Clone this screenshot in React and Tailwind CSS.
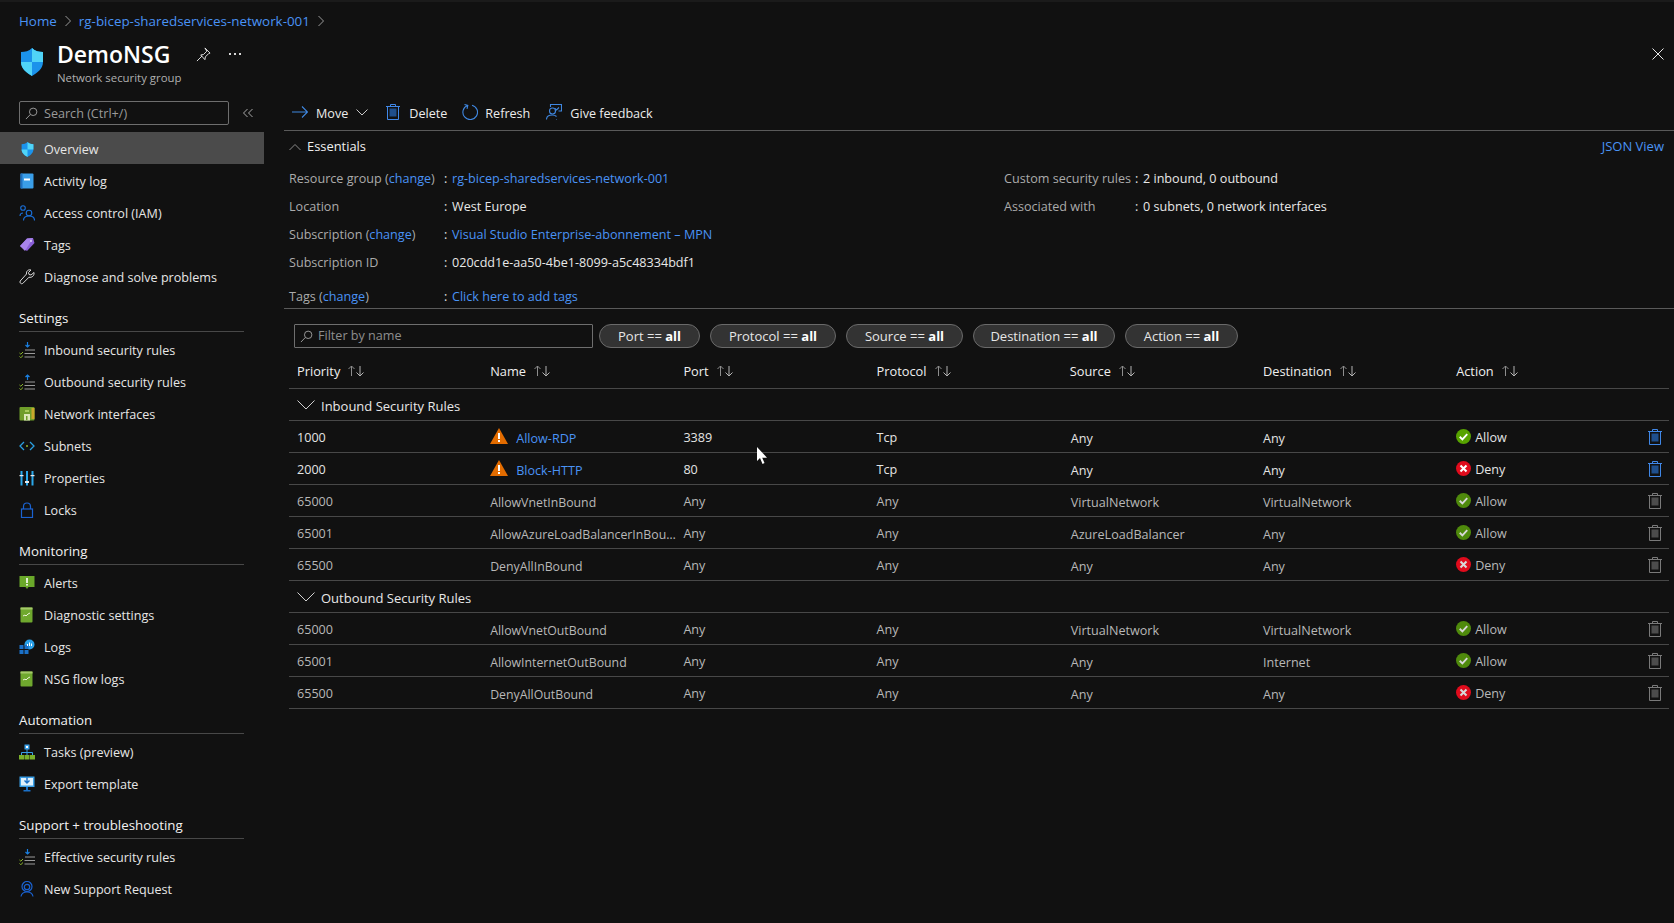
import React from 'react';

const LINK = 'text-[#4a93f5]';

function Shield({ className }) {
  return (
    <svg viewBox="0 0 24 28" className={className}>
      <path d="M12 0C9 3 5 4 1 4v10c0 7 6 11 11 14 5-3 11-7 11-14V4c-4 0-8-1-11-4z" fill="#1b93eb" />
      <path d="M12 0c3 3 7 4 11 4v10H12z" fill="#50d4f7" />
      <path d="M12 14H1c0 7 6 11 11 14z" fill="#50d4f7" />
    </svg>
  );
}

function SmallSearch() {
  return (
    <svg viewBox="0 0 14 14" className="w-[13px] h-[13px] shrink-0" fill="none" stroke="#a0a0a0" strokeWidth="1">
      <circle cx="8.8" cy="5.2" r="4" />
      <path d="M5.8 8L1 13" />
    </svg>
  );
}

function RuleList({ up }) {
  return (
    <svg viewBox="0 0 16 16" className="w-4 h-4" fill="none">
      {up ? (
        <path d="M8.5 6V1M6.5 3l2-2 2 2" stroke="#1a7fe0" strokeWidth="1.2" />
      ) : (
        <path d="M8.5 0v5M6.5 3l2 2 2-2" stroke="#1a7fe0" strokeWidth="1.2" />
      )}
      <path d="M6 8h10M5.5 11.5H16M5.5 15H16" stroke="#9a9a9a" strokeWidth="1.2" />
      <path d="M0.5 11l1.3 1.2L4 10M0.5 14.5l1.3 1.2L4 13.5" stroke="#8cb82a" strokeWidth="1" />
    </svg>
  );
}

function NavIcon({ name }) {
  const c = 'w-4 h-4';
  switch (name) {
    case 'shield':
      return <Shield className="w-[13px] h-[15px] mx-[1.5px]" />;
    case 'activity':
      return (
        <svg viewBox="0 0 16 16" className={c}>
          <rect x="1.5" y="0.5" width="13" height="15" rx="1" fill="#3a9ee8" />
          <rect x="1.5" y="0.5" width="2" height="15" fill="#1f70c0" />
          <rect x="5" y="5.5" width="6" height="2" fill="#fff" />
        </svg>
      );
    case 'iam':
      return (
        <svg viewBox="0 0 16 16" className={c} fill="none" stroke="#1a6fd8" strokeWidth="1.1">
          <circle cx="4" cy="3" r="2.3" />
          <circle cx="10" cy="8" r="2.8" />
          <path d="M1 11c0-2 1-3 3-3M4.5 15.5c0-3 2.5-4.5 5.5-4.5s5.5 1.500 5.500 4.500" />
        </svg>
      );
    case 'tag':
      return (
        <svg viewBox="0 0 16 16" className={c}>
          <path d="M1 9l7-7.500 6-.5 1.500 5-7.500 8z" fill="#8a5fd8" />
          <path d="M1 9l7-7.500 6-.5-8 13z" fill="#a884ea" />
          <circle cx="12" cy="4" r="1" fill="#e0d4f8" />
        </svg>
      );
    case 'wrench':
      return (
        <svg viewBox="0 0 16 16" className={c} fill="none" stroke="#d8d8d8" strokeWidth="1">
          <path d="M15 3.500l-3 2.500-2-.5-.5-2L12 1C9.500.200 7 2 7.500 5L1.200 12c-1 1.500 1 3.500 2.500 2.500L10 8.200c3 .8 5.500-1.700 5-4.700z" />
        </svg>
      );
    case 'inbound':
      return <RuleList />;
    case 'outbound':
      return <RuleList up />;
    case 'nic':
      return (
        <svg viewBox="0 0 16 16" className={c}>
          <rect x="0.5" y="1" width="15" height="13.500" rx="1" fill="#6f9e2a" />
          <rect x="12.500" y="2" width="3" height="11" fill="#c9a72c" />
          <path d="M5 8h6v6.500H5z" fill="#dbe8b8" />
          <rect x="6" y="4" width="4" height="2" fill="#a8cc5c" />
          <rect x="7" y="10" width="1.500" height="4" fill="#6f9e2a" />
        </svg>
      );
    case 'subnet':
      return (
        <svg viewBox="0 0 16 16" className={c} fill="none" stroke="#2a9fe0" strokeWidth="1.300">
          <path d="M5 4L1 8l4 4M11 4l4 4-4 4" />
          <circle cx="8" cy="8" r="1" fill="#8cb82a" stroke="none" />
        </svg>
      );
    case 'props':
      return (
        <svg viewBox="0 0 16 16" className={c}>
          <rect x="1.500" y="1" width="2" height="14.500" fill="#2aa8ea" />
          <rect x="7" y="1" width="2" height="14.500" fill="#2aa8ea" />
          <rect x="12.500" y="1" width="2" height="14.500" fill="#2aa8ea" />
          <rect x="0.500" y="5" width="4" height="1.200" fill="#e8e8e8" />
          <rect x="6" y="11" width="4" height="2" fill="#e8e8e8" />
          <rect x="11.500" y="5" width="4" height="1.200" fill="#e8e8e8" />
        </svg>
      );
    case 'lock':
      return (
        <svg viewBox="0 0 16 16" className={c} fill="none" stroke="#1a62d0" strokeWidth="1.200">
          <rect x="2.500" y="7" width="11" height="8.500" />
          <path d="M4.500 7V4.500a3.500 3.500 0 0 1 7 0V7" />
        </svg>
      );
    case 'alert':
      return (
        <svg viewBox="0 0 16 16" className={c}>
          <path d="M0.500 1h15v11h-6l-1.500 2-1.500-2h-6z" fill="#6aa82a" />
          <rect x="7.200" y="3" width="1.600" height="5" fill="#fff" />
          <rect x="7.200" y="9" width="1.600" height="1.600" fill="#fff" />
        </svg>
      );
    case 'diag':
      return (
        <svg viewBox="0 0 16 16" className={c}>
          <rect x="1.500" y="0.500" width="12" height="15" rx="1" fill="#6fa82e" />
          <rect x="1.500" y="0.500" width="12" height="2" fill="#a5c96a" />
          <path d="M4 9l2-1 1 1 2-2 2-1" stroke="#e8f2d4" strokeWidth="1" fill="none" />
        </svg>
      );
    case 'logs':
      return (
        <svg viewBox="0 0 16 16" className={c}>
          <circle cx="10.500" cy="5.500" r="5" fill="#2aa0e8" />
          <rect x="0.500" y="6" width="4" height="4" fill="#1a70c8" />
          <rect x="5.500" y="6" width="4" height="4" fill="#1a70c8" />
          <rect x="0.500" y="11" width="4" height="4" fill="#1a70c8" />
          <rect x="5.500" y="11" width="4" height="4" fill="#1a70c8" />
          <path d="M8.500 7V5M10.500 7V3.500M12.500 7V4.500" stroke="#fff" strokeWidth="1" />
        </svg>
      );
    case 'tasks':
      return (
        <svg viewBox="0 0 16 16" className={c}>
          <path d="M8 5v4M2.500 11V8.500h11V11M8 8.500V11" stroke="#3aa0e8" strokeWidth="1" fill="none" />
          <rect x="5.500" y="0.500" width="5" height="5" fill="#3aa0e8" />
          <rect x="7" y="2" width="2" height="2" fill="#fff" />
          <rect x="0" y="11" width="5" height="4.500" fill="#7ab02a" />
          <rect x="5.500" y="11" width="5" height="4.500" fill="#7ab02a" />
          <rect x="11" y="11" width="5" height="4.500" fill="#7ab02a" />
        </svg>
      );
    case 'export':
      return (
        <svg viewBox="0 0 16 16" className={c}>
          <rect x="0.500" y="0.500" width="15" height="10.500" fill="#3aa0e8" />
          <rect x="2" y="2" width="12" height="7.500" fill="#dff1fc" />
          <path d="M8 1.500v5M5.500 4.500L8 7l2.500-2.500" stroke="#1a70c8" strokeWidth="1.400" fill="none" />
          <rect x="7" y="11" width="2" height="3" fill="#1a70c8" />
          <rect x="4.500" y="14" width="7" height="1.500" fill="#1a70c8" />
        </svg>
      );
    case 'support':
      return (
        <svg viewBox="0 0 16 16" className={c} fill="none" stroke="#1a62d0" strokeWidth="1.200">
          <circle cx="8" cy="5.500" r="5" />
          <circle cx="8" cy="6" r="2.700" />
          <path d="M2 15.500c.5-3 3-4.500 6-4.500s5.500 1.500 6 4.500" />
        </svg>
      );
    default:
      return null;
  }
}

const navGroups = [
  {
    items: [
      ['shield', 'Overview'],
      ['activity', 'Activity log'],
      ['iam', 'Access control (IAM)'],
      ['tag', 'Tags'],
      ['wrench', 'Diagnose and solve problems'],
    ],
  },
  {
    title: 'Settings',
    items: [
      ['inbound', 'Inbound security rules'],
      ['outbound', 'Outbound security rules'],
      ['nic', 'Network interfaces'],
      ['subnet', 'Subnets'],
      ['props', 'Properties'],
      ['lock', 'Locks'],
    ],
  },
  {
    title: 'Monitoring',
    items: [
      ['alert', 'Alerts'],
      ['diag', 'Diagnostic settings'],
      ['logs', 'Logs'],
      ['diag', 'NSG flow logs'],
    ],
  },
  {
    title: 'Automation',
    items: [
      ['tasks', 'Tasks (preview)'],
      ['export', 'Export template'],
    ],
  },
  {
    title: 'Support + troubleshooting',
    items: [
      ['inbound', 'Effective security rules'],
      ['support', 'New Support Request'],
    ],
  },
];

function Sidebar() {
  return (
    <aside className="w-[284px] shrink-0">
      <div className="flex items-center pt-[7px] pb-[7px]">
        <div className="ml-[19px] w-[210px] h-[24px] border border-[#6e6e6e] rounded-[2px] flex items-center pl-[5px] gap-[6px] text-[#9a9a9a]">
          <SmallSearch />
          <span className="pt-[3px]">Search (Ctrl+/)</span>
        </div>
        <svg viewBox="0 0 12 12" className="w-3 h-3 ml-[13px]" fill="none" stroke="#a8a8a8" strokeWidth="1">
          <path d="M5.500 2L1.500 6l4 4M10.500 2l-4 4 4 4" />
        </svg>
      </div>
      <nav className="w-[264px]">
        {navGroups.map((g, i) => (
          <div key={i}>
            {g.title && (
              <div className="mt-[15px] ml-[19px] w-[225px] h-[25px] mb-px pt-[2px] border-b border-[#484848] text-[13.3px] font-medium text-[#f2f2f2] leading-[18px]">
                {g.title}
              </div>
            )}
            {g.items.map(([icon, label]) => (
              <div
                key={label}
                className={`h-8 flex items-center pl-[19px] gap-[9px] text-[#e6e6e6] ${label === 'Overview' ? 'bg-[#4b4b4b]' : ''}`}
              >
                <span className="pt-[2px]"><NavIcon name={icon} /></span>
                <span className="pt-[4px]">{label}</span>
              </div>
            ))}
          </div>
        ))}
      </nav>
    </aside>
  );
}

function Toolbar() {
  return (
    <div className="h-[37px] border-b border-[#5a5a5a] flex items-center pl-[8px] text-[#ececec]">
      <svg viewBox="0 0 16 16" className="w-4 h-4" fill="none" stroke="#3f87e0" strokeWidth="1.100">
        <path d="M0 8h15.500M10 2.500L15.500 8 10 13.500" />
      </svg>
      <span className="ml-[8px] pt-[4px]">Move</span>
      <svg viewBox="0 0 12 12" className="w-3 h-3 ml-[8px]" fill="none" stroke="#c8c8c8" strokeWidth="1">
        <path d="M0.500 3.500L6 9l5.500-5.500" />
      </svg>
      <span className="ml-[18px]"><Trash blue /></span>
      <span className="ml-[9px] pt-[4px]">Delete</span>
      <svg viewBox="0 0 16 16" className="w-4 h-4 ml-[15px]" fill="none" stroke="#3f87e0" strokeWidth="1.100">
        <path d="M5.500 1.500A7.300 7.300 0 1 0 10 1.200M2.500 0.500L5.800 1.500 5 4.800" />
      </svg>
      <span className="ml-[7px] pt-[4px]">Refresh</span>
      <svg viewBox="0 0 16 16" className="w-4 h-4 ml-[16px]" fill="none" stroke="#3f87e0" strokeWidth="1.100">
        <path d="M4.500 3V.500h11V7h-3" />
        <circle cx="6.500" cy="7" r="3" />
        <path d="M0.500 15.500c0-3 2.500-4.500 6-4.500 1.500 0 3 .5 4 1.500M10 15.500h.5M9 4.500l1.500 1.500L13 3.500" />
      </svg>
      <span className="ml-[8px] pt-[4px]">Give feedback</span>
    </div>
  );
}

function Change() {
  return (
    <>
      (<span className={LINK}>change</span>)
    </>
  );
}

function Row({ label, wide, colonW, children, className = '' }) {
  return (
    <div className={`flex items-center pt-[2px] whitespace-nowrap ${className}`}>
      <div className="text-[#ababab]" style={{ width: wide }}>{label}</div>
      <div className="text-[#e0e0e0]" style={{ width: colonW }}>:</div>
      <div className="text-[#e8e8e8]">{children}</div>
    </div>
  );
}

function Essentials() {
  return (
    <section className="border-b border-[#5a5a5a] pl-[5px] pr-[10px]">
      <div className="h-[33px] flex items-center justify-between">
        <div className="flex items-center font-medium text-[12.9px] text-[#f0f0f0]">
          <svg viewBox="0 0 12 8" className="w-3 h-2 mr-[6px]" fill="none" stroke="#8a8a8a" strokeWidth="1">
            <path d="M0.500 7L6 1.500 11.500 7" />
          </svg>
          <span className="pb-[2px]">Essentials</span>
        </div>
        <span className={`${LINK} text-[13px] pb-[2px]`}>JSON View</span>
      </div>
      <div className="flex">
        <div className="w-[715px]">
          <Row label={<>Resource group <Change /></>} wide={155} colonW={8} className="h-7">
            <span className={LINK}>rg-bicep-sharedservices-network-001</span>
          </Row>
          <Row label="Location" wide={155} colonW={8} className="h-7">West Europe</Row>
          <Row label={<>Subscription <Change /></>} wide={155} colonW={8} className="h-7">
            <span className={LINK}>Visual Studio Enterprise-abonnement – MPN</span>
          </Row>
          <Row label="Subscription ID" wide={155} colonW={8} className="h-7">020cdd1e-aa50-4be1-8099-a5c48334bdf1</Row>
          <Row label={<>Tags <Change /></>} wide={155} colonW={8} className="h-6 mt-2">
            <span className={LINK}>Click here to add tags</span>
          </Row>
        </div>
        <div>
          <Row label="Custom security rules" wide={131} colonW={8} className="h-7">2 inbound, 0 outbound</Row>
          <Row label="Associated with" wide={131} colonW={8} className="h-7">0 subnets, 0 network interfaces</Row>
        </div>
      </div>
    </section>
  );
}

function Filters() {
  const pills = [
    ['Port', 'w-[101px]'],
    ['Protocol', 'w-[126px]'],
    ['Source', 'w-[117px]'],
    ['Destination', 'w-[142px]'],
    ['Action', 'w-[113px]'],
  ];
  return (
    <div className="flex items-center gap-[10px] ml-[10px] mt-[15px]">
      <div className="w-[299px] h-[24px] border border-[#6e6e6e] rounded-[1px] flex items-center pl-[5px] gap-[5px] text-[#8e8e8e] mr-[-4px]">
        <SmallSearch />
        <span className="pt-px">Filter by name</span>
      </div>
      {pills.map(([p, w]) => (
        <div key={p} className={`${w} h-[24px] pt-[2px] rounded-full border border-[#6a6a6a] bg-[#333333] flex items-center justify-center text-[13px] text-[#e6e6e6]`}>
          <span>{p} == <b className="font-bold text-white">all</b></span>
        </div>
      ))}
    </div>
  );
}

function SortIcon() {
  return (
    <svg viewBox="0 0 16 12" className="w-4 h-3 ml-[8px] mt-[2px]" fill="none" strokeWidth="1">
      <path d="M3.500 11V1M0.500 4l3-3 3 3" stroke="#8e8e8e" />
      <path d="M12 1v10M8.500 7.500L12 11l3.500-3.500" stroke="#b4b4b4" />
    </svg>
  );
}

function Trash({ blue }) {
  const stroke = blue ? '#4088e8' : '#7a7a7a';
  const fill = blue ? '#1f4f8c' : '#4c4c4c';
  return (
    <svg viewBox="0 0 14 16" className="w-[14px] h-[16px] block" fill="none" stroke={stroke} strokeWidth="1">
      <path d="M0 2.500h14M4.500 2.500V.5h5v2M1.500 2.500v13h11v-13" />
      <rect x="3.500" y="4.500" width="7" height="8" fill={fill} stroke="none" />
    </svg>
  );
}

function StatusIcon({ allow, dim }) {
  const bg = allow ? (dim ? '#4f8a0c' : '#57a300') : '#e00b1c';
  const mark = dim ? '#d8d8d8' : '#ffffff';
  return (
    <svg viewBox="0 0 16 16" className="w-[15px] h-[15px] shrink-0">
      <circle cx="8" cy="8" r="8" fill={bg} />
      {allow ? (
        <path d="M4 8.300l2.800 2.700L12 5.500" stroke={mark} strokeWidth="2" fill="none" />
      ) : (
        <path d="M4.800 4.800l6.400 6.400M11.200 4.800l-6.400 6.400" stroke={mark} strokeWidth="2.200" fill="none" />
      )}
    </svg>
  );
}

const columns = 'grid grid-cols-[repeat(7,193.2px)_1fr] items-center pl-[8px]';

const inbound = [
  ['1000', 'Allow-RDP', '3389', 'Tcp', 'Any', 'Any', 'Allow', true],
  ['2000', 'Block-HTTP', '80', 'Tcp', 'Any', 'Any', 'Deny', true],
  ['65000', 'AllowVnetInBound', 'Any', 'Any', 'VirtualNetwork', 'VirtualNetwork', 'Allow'],
  ['65001', 'AllowAzureLoadBalancerInBou…', 'Any', 'Any', 'AzureLoadBalancer', 'Any', 'Allow'],
  ['65500', 'DenyAllInBound', 'Any', 'Any', 'Any', 'Any', 'Deny'],
];

const outbound = [
  ['65000', 'AllowVnetOutBound', 'Any', 'Any', 'VirtualNetwork', 'VirtualNetwork', 'Allow'],
  ['65001', 'AllowInternetOutBound', 'Any', 'Any', 'Any', 'Internet', 'Allow'],
  ['65500', 'DenyAllOutBound', 'Any', 'Any', 'Any', 'Any', 'Deny'],
];

function RuleRow({ rule }) {
  const [prio, name, port, proto, src, dst, action, custom] = rule;
  const text = custom ? 'text-[#e4e4e4]' : 'text-[#b8b8b8]';
  return (
    <div className={`${columns} h-8 border-b border-[#484848] ${text}`}>
      <div className="pt-[4px]">{prio}</div>
      <div className="flex items-center whitespace-nowrap">
        {custom ? (
          <>
            <svg viewBox="0 0 18 16" className="w-[18px] h-4 mr-[8px] -mt-[1px]">
              <path d="M9 0l9 16H0z" fill="#e36c00" />
              <rect x="8" y="5" width="2" height="6" fill="#fff" />
              <rect x="8" y="12" width="2" height="2" fill="#fff" />
            </svg>
            <span className={`${LINK} pt-[6px]`}>{name}</span>
          </>
        ) : (
          <span className="pt-[6px] text-[12.3px]">{name}</span>
        )}
      </div>
      <div className="pt-[4px]">{port}</div>
      <div className="pt-[4px]">{proto}</div>
      <div className="pt-[6px] pl-px">{src}</div>
      <div className="pt-[6px]">{dst}</div>
      <div className="flex items-center gap-[4px]">
        <StatusIcon allow={action === 'Allow'} dim={!custom} />
        <span className="pt-[4px]">{action}</span>
      </div>
      <div className="-ml-px"><Trash blue={custom} /></div>
    </div>
  );
}

function GroupHead({ title }) {
  return (
    <div className="h-8 border-b border-[#484848] flex items-center pl-[8px] font-medium text-[13px] text-[#e8e8e8]">
      <svg viewBox="0 0 18 10" className="w-[18px] h-[10px] mr-[6px]" fill="none" stroke="#d0d0d0" strokeWidth="1">
        <path d="M0.500 0.500L9 9l8.500-8.500" />
      </svg>
      <span className="pt-[4px]">{title}</span>
    </div>
  );
}

function RulesTable() {
  const head = ['Priority', 'Name', 'Port', 'Protocol', 'Source', 'Destination', 'Action'];
  return (
    <div className="ml-[5px] mr-[5px] mt-[4px]">
      <div className={`${columns} h-[37px] border-b border-[#484848] font-medium text-[12.8px] text-[#efefef]`}>
        {head.map((h) => (
          <div key={h} className="flex items-center">
            <span className="pt-[4px]">{h}</span>
            <SortIcon />
          </div>
        ))}
      </div>
      <GroupHead title="Inbound Security Rules" />
      {inbound.map((r) => <RuleRow key={r[1]} rule={r} />)}
      <GroupHead title="Outbound Security Rules" />
      {outbound.map((r) => <RuleRow key={r[1]} rule={r} />)}
    </div>
  );
}

export default function App() {
  return (
    <div className="relative h-screen overflow-hidden flex flex-col bg-[#111111] text-[12.6px] font-['Open_Sans',sans-serif] text-white">
      <header className="h-[94px] shrink-0 pl-[19px] pr-[10px] relative border-t-2 border-[#1b1b1b]">
        <div className="h-[38px] mb-[2px] flex items-center text-[13.4px]">
          <span className={LINK}>Home</span>
          <svg viewBox="0 0 8 12" className="w-2 h-3 mx-[7px]" fill="none" stroke="#9a9a9a" strokeWidth="1">
            <path d="M1.500 1l5 5-5 5" />
          </svg>
          <span className={LINK}>rg-bicep-sharedservices-network-001</span>
          <svg viewBox="0 0 8 12" className="w-2 h-3 mx-[7px]" fill="none" stroke="#9a9a9a" strokeWidth="1">
            <path d="M1.500 1l5 5-5 5" />
          </svg>
        </div>
        <div className="flex items-start">
          <Shield className="w-[24px] h-[28px] mt-[6px] ml-[1px]" />
          <div className="ml-[13px] -mt-[3px]">
            <div className="flex items-center h-[30px]">
              <h1 className="text-[23px] font-semibold leading-[30px]">DemoNSG</h1>
              <svg viewBox="0 0 16 16" className="w-[15px] h-[15px] ml-[26px]" fill="none" stroke="#e8e8e8" strokeWidth="1">
                <path d="M9.500 1l5.500 5.500-1.500.5-3.500 3.500-.5 3L5 8.500l3-.5L11.500 4.500zM6.500 9.500L1 15" />
              </svg>
              <span className="ml-[18px] flex gap-[3px]">
                <i className="w-[2px] h-[2px] bg-[#d8d8d8]" />
                <i className="w-[2px] h-[2px] bg-[#d8d8d8]" />
                <i className="w-[2px] h-[2px] bg-[#d8d8d8]" />
              </span>
            </div>
            <div className="text-[11.4px] text-[#b0b0b0] leading-[16px] mt-[1px]">Network security group</div>
          </div>
        </div>
        <svg viewBox="0 0 12 12" className="absolute right-[10px] top-[46px] w-3 h-3" fill="none" stroke="#e8e8e8" strokeWidth="1">
          <path d="M0.500 0.500l11 11M11.500 0.500l-11 11" />
        </svg>
      </header>
      <div className="flex flex-1 min-h-0">
        <Sidebar />
        <main className="flex-1 min-w-0">
          <Toolbar />
          <Essentials />
          <Filters />
          <RulesTable />
        </main>
      </div>
      <svg viewBox="0 0 12 19" className="absolute left-[756px] top-[446px] w-3 h-[19px]">
        <path d="M1 1v14l3-3 2.500 6 2-1-2.300-5.300H11z" fill="#fff" />
      </svg>
    </div>
  );
}
